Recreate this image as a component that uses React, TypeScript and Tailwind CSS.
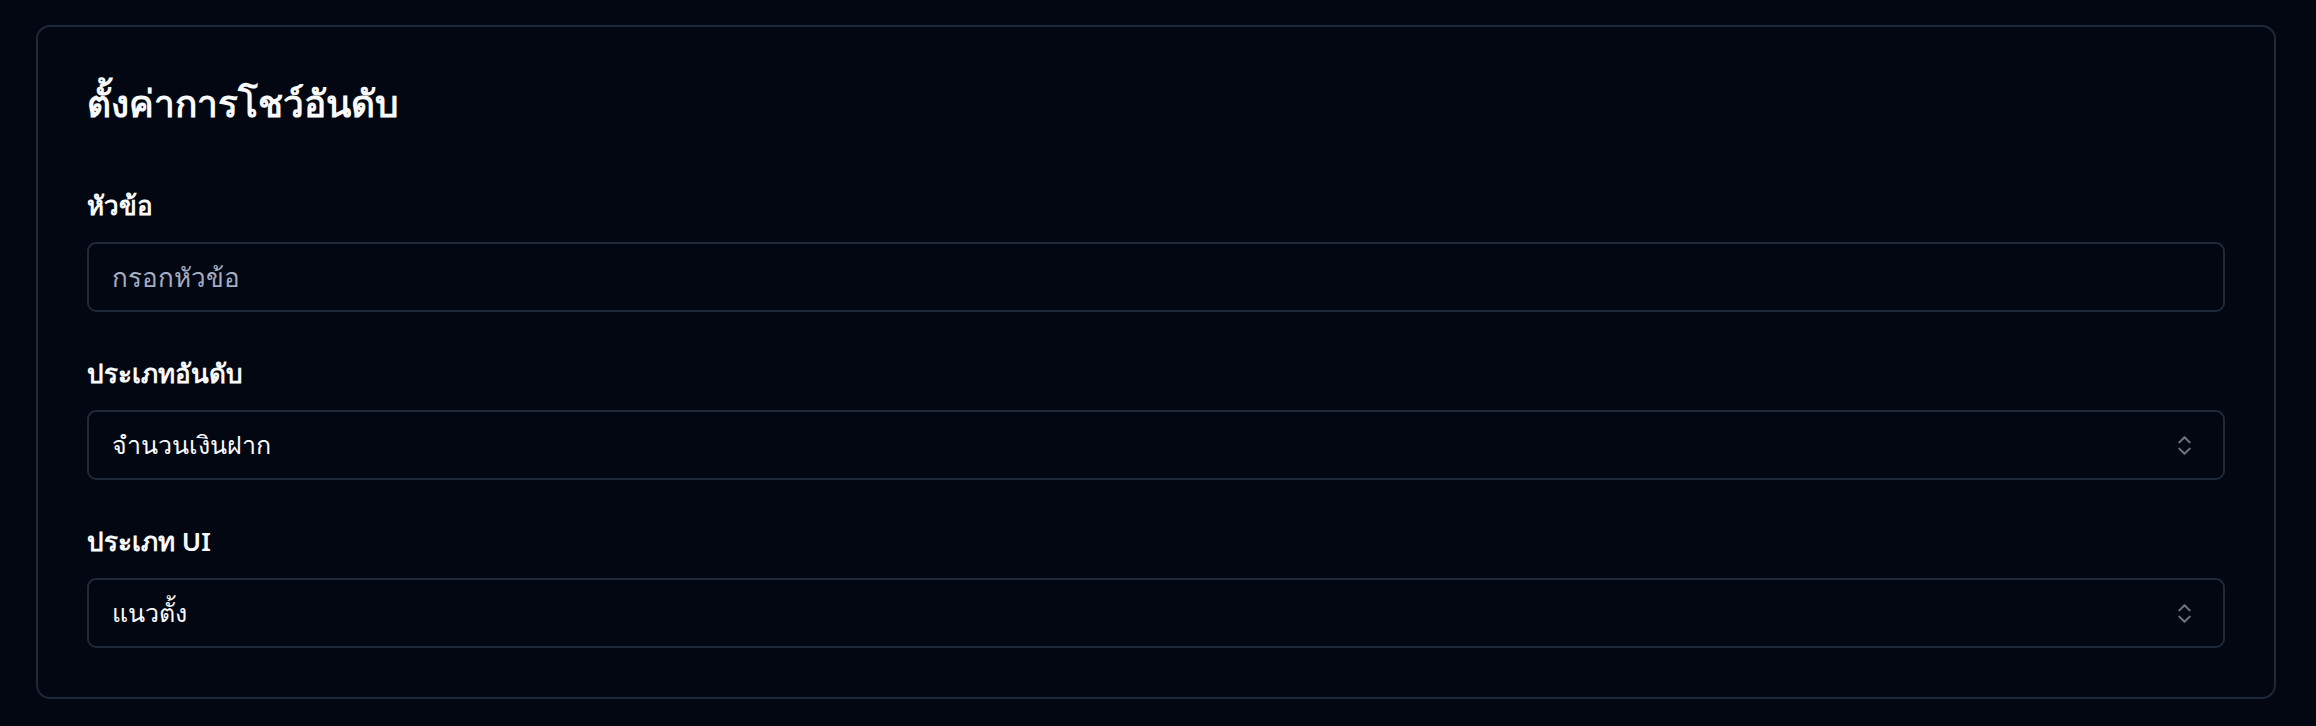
import { ChevronsUpDown } from 'lucide-react';

function Field({ label, children }: { label: string; children: React.ReactNode }) {
  return (
    <div className="flex flex-col gap-[19px]">
      <label className="text-[26px] leading-[36px] font-semibold text-gray-50">{label}</label>
      {children}
    </div>
  );
}

function SelectBox({ value }: { value: string }) {
  return (
    <div className="flex h-[70px] items-center justify-between rounded-[9px] border-2 border-gray-800 pl-[23px] pr-[26px]">
      <span className="text-[25px] font-medium text-gray-50">{value}</span>
      <ChevronsUpDown className="h-[25px] w-[25px] text-gray-400 opacity-70" strokeWidth={2} />
    </div>
  );
}

export default function App() {
  return (
    <div
      className="min-h-screen bg-gray-950 pl-[36px] pr-[40px] pt-[25px] pb-[26px]"
      style={{ fontFamily: '"Noto Sans", "Liberation Sans", sans-serif' }}
    >
      <div className="rounded-[14px] border-2 border-gray-800 px-[49px] pt-[49px] pb-[49px]">
        {/* Header */}
        <h2 className="text-[37px] leading-[54px] font-bold text-gray-50">ตั้งค่าการโชว์อันดับ</h2>

        <div className="mt-[57px] flex flex-col gap-[43px]">
          <Field label="หัวข้อ">
            <input
              placeholder="กรอกหัวข้อ"
              className="h-[70px] w-full rounded-[9px] border-2 border-gray-800 bg-transparent px-[23px] text-[26px] text-gray-50 outline-none placeholder:text-[#a3adc2]"
            />
          </Field>

          <Field label="ประเภทอันดับ">
            <SelectBox value="จำนวนเงินฝาก" />
          </Field>

          <Field label="ประเภท UI">
            <SelectBox value="แนวตั้ง" />
          </Field>
        </div>
      </div>
    </div>
  );
}
